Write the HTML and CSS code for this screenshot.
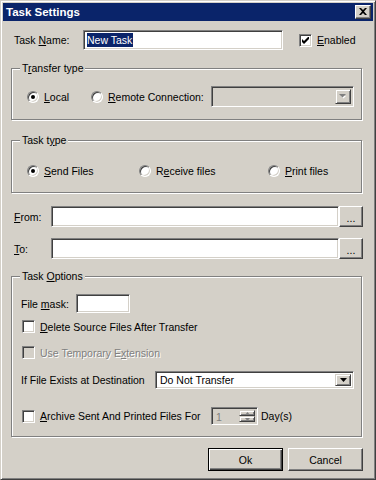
FILE: index.html
```html
<!DOCTYPE html>
<html lang="en">
<head>
  <meta charset="UTF-8" />
  <meta name="viewport" content="width=device-width, initial-scale=1.0" />
  <title>Task Settings</title>
  <link rel="stylesheet" href="styles.css">
</head>
<body>
  <div class="window">
    <div class="titlebar">
      <span class="title">Task Settings</span>
      <span class="close-btn">
        <svg width="8" height="7" viewBox="0 0 8 7"><path d="M0 0h2l2 2 2-2h2L5 3.5 8 7H6L4 5 2 7H0l3-3.5z" fill="#000"/></svg>
      </span>
    </div>

    <div class="dialog">
      <div class="row name-row">
        <span class="name-label">Task <u>N</u>ame:</span>
        <div class="edit name-edit"><span class="selected">New Task</span></div>
        <span class="check">
          <svg width="7" height="7" viewBox="0 0 7 7"><path d="M0 2v3l2 2 5-5V-1L2 4z" fill="#000"/></svg>
        </span>
        <span class="check-label"><u>E</u>nabled</span>
      </div>

      <div class="group transfer-group">
        <span class="legend">T<u>r</u>ansfer type</span>
        <div class="row group-row">
          <span class="option opt-local"><span class="radio on"></span><span class="opt-text"><u>L</u>ocal</span></span>
          <span class="option opt-remote"><span class="radio"></span><span class="opt-text"><u>R</u>emote Connection:</span></span>
          <div class="edit combo combo-disabled">
            <span class="combo-text"></span>
            <span class="drop-btn">
              <svg width="8" height="5" viewBox="0 0 8 5"><path d="M1 1h5L3.5 3.5z" fill="#fff" transform="translate(1 1)"/><path d="M0 0h7L3.5 3.5z" fill="#808080"/></svg>
            </span>
          </div>
        </div>
      </div>

      <div class="group type-group">
        <span class="legend">Task t<u>y</u>pe</span>
        <div class="row group-row">
          <span class="option opt-send"><span class="radio on"></span><span class="opt-text"><u>S</u>end Files</span></span>
          <span class="option opt-receive"><span class="radio"></span><span class="opt-text">R<u>e</u>ceive files</span></span>
          <span class="option"><span class="radio"></span><span class="opt-text"><u>P</u>rint files</span></span>
        </div>
      </div>

      <div class="row path-row from-row">
        <span class="path-label"><u>F</u>rom:</span>
        <div class="edit path-edit"></div>
        <span class="btn browse-btn">...</span>
      </div>
      <div class="row path-row to-row">
        <span class="path-label"><u>T</u>o:</span>
        <div class="edit path-edit"></div>
        <span class="btn browse-btn">...</span>
      </div>

      <div class="group options-group">
        <span class="legend">Task <u>O</u>ptions</span>
        <div class="row mask-row">
          <span class="mask-label">File <u>m</u>ask:</span>
          <div class="edit mask-edit"></div>
        </div>
        <div class="row check-row delete-row">
          <span class="check"></span>
          <span class="check-label"><u>D</u>elete Source Files After Transfer</span>
        </div>
        <div class="row check-row temp-row">
          <span class="check disabled"></span>
          <span class="check-label disabled-text">Use Temporary E<u>x</u>tension</span>
        </div>
        <div class="row exists-row">
          <span class="exists-label">If File Exists at Destination</span>
          <div class="edit combo exists-combo">
            <span class="combo-text">Do Not Transfer</span>
            <span class="drop-btn">
              <svg width="7" height="4" viewBox="0 0 7 4"><path d="M0 0h7L3.5 4z" fill="#000"/></svg>
            </span>
          </div>
        </div>
        <div class="row check-row archive-row">
          <span class="check"></span>
          <span class="check-label archive-label"><u>A</u>rchive Sent And Printed Files For</span>
          <div class="edit spinner">
            <span class="spin-text">1</span>
            <span class="spin-btns">
              <span class="spin-btn"><svg width="5" height="3" viewBox="0 0 5 3"><path d="M2.5 0L5 3H0z" fill="#808080"/></svg></span>
              <span class="spin-btn"><svg width="5" height="3" viewBox="0 0 5 3"><path d="M0 0h5L2.5 3z" fill="#808080"/></svg></span>
            </span>
          </div>
          <span class="days">Day(s)</span>
        </div>
      </div>

      <div class="row button-row">
        <span class="btn dialog-btn default-btn">Ok</span>
        <span class="btn dialog-btn">Cancel</span>
      </div>
    </div>
  </div>
</body>
</html>
```

FILE: styles.css
```css
body {
  margin: 0;
  font-family: "Liberation Sans", Arial, sans-serif;
  font-size: 10.5px;
  color: #000;
  white-space: nowrap;
}

u {
  text-decoration-thickness: 1px;
  text-underline-offset: 1px;
}

.window {
  width: 376px;
  height: 480px;
  box-sizing: border-box;
  background-color: #d4d0c8;
  border: 1px solid;
  border-color: #d4d0c8 #404040 #404040 #d4d0c8;
  box-shadow: inset 1px 1px 0 #fff, inset -1px -1px 0 #808080;
  padding: 2px;
  display: flex;
  flex-direction: column;
}

/* title bar */
.titlebar {
  height: 18px;
  flex: none;
  background-color: #0a246a;
  display: flex;
  align-items: center;
  justify-content: space-between;
  padding: 0 2px 0 3px;
}

.title {
  color: white;
  font-weight: bold;
  font-size: 11.5px;
}

.close-btn {
  width: 16px;
  height: 14px;
  box-sizing: border-box;
  background-color: #d4d0c8;
  border: 1px solid;
  border-color: #fff #404040 #404040 #fff;
  box-shadow: inset -1px -1px 0 #808080;
  display: flex;
  align-items: center;
  justify-content: center;
  padding-bottom: 1px;
}

.close-btn svg {
  display: block;
}

/* dialog body */
.dialog {
  flex: 1;
  display: flex;
  flex-direction: column;
  padding: 0 10px 0 8px;
}

.row {
  display: flex;
  align-items: center;
  flex: none;
}

.edit {
  box-sizing: border-box;
  background-color: #fff;
  border: 1px solid;
  border-color: #808080 #fff #fff #808080;
  box-shadow: inset 1px 1px 0 #404040, inset -1px -1px 0 #d4d0c8;
}

.btn {
  box-sizing: border-box;
  background-color: #d4d0c8;
  border: 1px solid;
  border-color: #fff #404040 #404040 #fff;
  box-shadow: inset -1px -1px 0 #808080;
  display: flex;
  align-items: center;
  justify-content: center;
}

.name-row {
  margin-top: 9px;
  height: 20px;
}

.name-label {
  margin-left: 3px;
  width: 69px;
}

.name-edit {
  width: 200px;
  height: 20px;
  padding: 2px 0 0 3px;
}

.selected {
  display: inline-block;
  background-color: #0a246a;
  color: white;
  line-height: 14px;
  padding-right: 1px;
}

.check {
  width: 13px;
  height: 13px;
  flex: none;
  box-sizing: border-box;
  background-color: #fff;
  border: 1px solid;
  border-color: #808080 #fff #fff #808080;
  box-shadow: inset 1px 1px 0 #404040, inset -1px -1px 0 #d4d0c8;
  display: flex;
  align-items: center;
  justify-content: center;
}

.check svg {
  display: block;
}

.check.disabled {
  background-color: #d4d0c8;
}

.name-row .check {
  margin-left: 16px;
}

.check-label {
  margin-left: 5px;
}

.disabled-text {
  color: #808080;
  text-shadow: 1px 1px 0 #fff;
}

/* group boxes */
.group {
  width: 351px;
  box-sizing: border-box;
  border: 1px solid #808080;
  box-shadow: 1px 1px 0 #fff, inset 1px 1px 0 #fff;
  display: flex;
  flex-direction: column;
  flex: none;
}

.legend {
  align-self: flex-start;
  margin: -7px 0 0 8px;
  padding: 0 2px;
  line-height: 13px;
  height: 13px;
  background-color: #d4d0c8;
}

.transfer-group {
  margin-top: 18px;
  height: 52px;
}

.type-group {
  margin-top: 20px;
  height: 53px;
}

.group-row {
  height: 21px;
  padding-left: 15px;
}

.transfer-group .group-row {
  margin-top: 11px;
}

.type-group .group-row {
  margin-top: 13px;
}

.option {
  display: flex;
  align-items: center;
  flex: none;
}

.opt-local {
  width: 64px;
}

.opt-remote {
  width: 120px;
}

.opt-send {
  width: 112px;
}

.opt-receive {
  width: 129px;
}

.radio {
  width: 12px;
  height: 12px;
  box-sizing: border-box;
  border-radius: 50%;
  background-color: #fff;
  border: 1px solid;
  border-color: #808080 #fff #fff #808080;
  box-shadow: inset 1px 1px 0 #404040, inset -1px -1px 0 #d4d0c8;
  display: flex;
  align-items: center;
  justify-content: center;
}

.radio.on::after {
  content: "";
  width: 4px;
  height: 4px;
  border-radius: 50%;
  background-color: #000;
}

.opt-text {
  margin-left: 5px;
}

.combo {
  display: flex;
  align-items: stretch;
  justify-content: space-between;
  padding: 2px;
}

.combo-disabled {
  width: 143px;
  height: 21px;
  background-color: #d4d0c8;
}

.combo-text {
  padding-left: 2px;
  display: flex;
  align-items: center;
}

.drop-btn {
  width: 16px;
  box-sizing: border-box;
  background-color: #d4d0c8;
  border: 1px solid;
  border-color: #d4d0c8 #404040 #404040 #d4d0c8;
  box-shadow: inset 1px 1px 0 #fff, inset -1px -1px 0 #808080;
  display: flex;
  align-items: center;
  justify-content: center;
}

.drop-btn svg {
  display: block;
}

/* from / to */
.path-row {
  height: 21px;
}

.from-row {
  margin-top: 13px;
}

.to-row {
  margin-top: 11px;
}

.path-label {
  margin-left: 3px;
  width: 37px;
}

.path-edit {
  width: 288px;
  height: 21px;
}

.browse-btn {
  width: 24px;
  height: 21px;
  align-items: flex-end;
  padding-bottom: 4px;
  line-height: 8px;
}

/* task options */
.options-group {
  margin-top: 17px;
  height: 161px;
}

.mask-row {
  margin-top: 11px;
  height: 19px;
  padding-left: 9px;
}

.mask-label {
  width: 55px;
}

.mask-edit {
  width: 54px;
  height: 19px;
}

.check-row {
  padding-left: 10px;
  height: 17px;
}

.delete-row {
  margin-top: 5px;
}

.temp-row {
  margin-top: 9px;
}

.exists-row {
  margin-top: 10px;
  height: 18px;
  padding-left: 9px;
}

.exists-label {
  width: 134px;
}

.exists-combo {
  width: 199px;
  height: 18px;
}

.archive-row {
  margin-top: 18px;
  height: 18px;
}

.archive-label {
  width: 171px;
}

.spinner {
  width: 47px;
  height: 18px;
  background-color: #d4d0c8;
  display: flex;
  justify-content: space-between;
  padding: 2px;
}

.spin-text {
  color: #808080;
  padding-left: 2px;
  line-height: 14px;
}

.spin-btns {
  width: 16px;
  display: flex;
  flex-direction: column;
}

.spin-btn {
  flex: 1;
  box-sizing: border-box;
  background-color: #d4d0c8;
  border: 1px solid;
  border-color: #d4d0c8 #404040 #404040 #d4d0c8;
  box-shadow: inset 1px 1px 0 #fff, inset -1px -1px 0 #808080;
  display: flex;
  align-items: center;
  justify-content: center;
}

.spin-btn svg {
  display: block;
}

.days {
  margin-left: 3px;
}

/* bottom buttons */
.button-row {
  margin-top: 11px;
  justify-content: flex-end;
  gap: 5px;
}

.dialog-btn {
  width: 75px;
  height: 23px;
}

.default-btn {
  border: 1px solid #000;
  box-shadow: inset 1px 1px 0 #fff, inset -1px -1px 0 #404040, inset -2px -2px 0 #808080;
}
```
